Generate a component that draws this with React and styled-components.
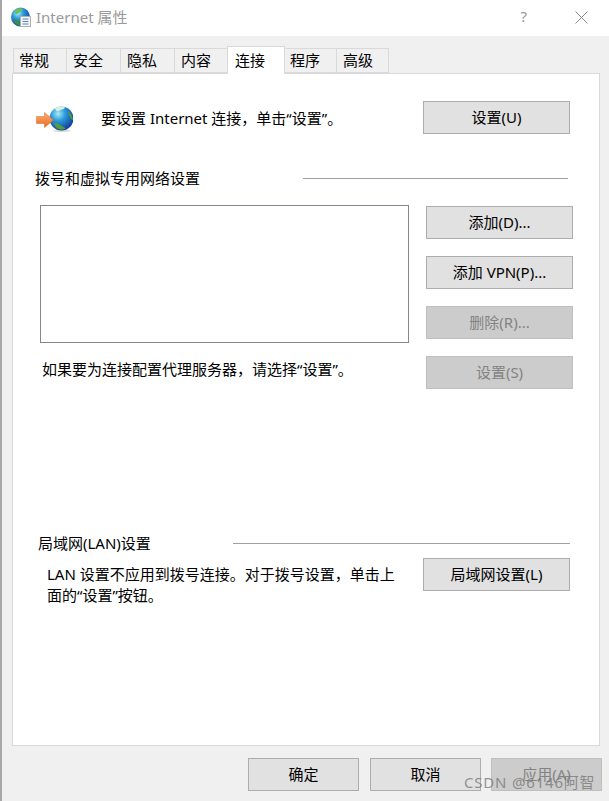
import React from "react";
import styled, { createGlobalStyle } from "styled-components";

const GlobalStyle = createGlobalStyle`
  html, body {
    margin: 0;
    padding: 0;
    background: #f0f0f0;
  }
  * {
    box-sizing: border-box;
  }
`;

const Window = styled.div`
  position: relative;
  width: 609px;
  height: 801px;
  overflow: hidden;
  background: #f0f0f0;
  border-left: 2px solid #a8a8a8;
  font-family: "Noto Sans", "Noto Sans CJK SC", sans-serif;
  font-size: 15px;
  color: #000;
`;

// 1px sliver of the page behind the dialog, left of its border
const BehindEdge = styled.div`
  position: absolute;
  left: -2px;
  top: ${({ $top }) => $top}px;
  width: 1px;
  height: ${({ $h }) => $h}px;
  background: ${({ $color }) => $color};
`;

const TitleBar = styled.div`
  height: 36px;
  background: #fff;
  display: flex;
  align-items: center;
  padding-left: 8px;
`;

const TitleText = styled.span`
  margin-left: 4px;
  padding-bottom: 4px;
  font-size: 15px;
  color: #9a9a9a;
`;

const TitleControls = styled.div`
  margin-left: auto;
  display: flex;
  align-items: center;
  gap: 48px;
  padding: 0 21px 2px 0;
`;

const Help = styled.span`
  padding-bottom: 2px;
  font-size: 15px;
  color: #9a9a9a;
`;

const Body = styled.div`
  padding: 10px 7px 0 10px;
`;

const Tabs = styled.div`
  display: flex;
  align-items: flex-end;
  height: 27px;
  padding-left: 1px;
  position: relative;
  z-index: 1;
`;

const Tab = styled.div`
  width: ${({ $w }) => $w}px;
  height: ${({ $active }) => ($active ? "28px" : "25px")};
  margin-bottom: ${({ $active }) => ($active ? "-1px" : "0")};
  margin-left: ${({ $active }) => ($active ? "-1px" : "0")};
  margin-right: ${({ $active }) => ($active ? "-1px" : "0")};
  display: flex;
  align-items: center;
  padding: 0 0 2px ${({ $first, $active }) => ($first ? 5 : $active ? 7 : 6)}px;
  background: ${({ $active }) => ($active ? "#fff" : "#f0f0f0")};
  border: 1px solid #d9d9d9;
  border-left-width: ${({ $first, $active }) => ($first || $active ? "1px" : "0")};
  border-bottom-width: ${({ $active }) => ($active ? "0" : "1px")};
  position: relative;
  z-index: ${({ $active }) => ($active ? 2 : 0)};
`;

const Panel = styled.div`
  width: 588px;
  height: 673px;
  background: #fff;
  border: 1px solid #d9d9d9;
  padding: 27px 29px 0 22px;
`;

const TopRow = styled.div`
  display: flex;
  align-items: center;
  height: 33px;
`;

const ArrowGlobe = styled.svg`
  width: 38px;
  height: 28px;
  flex: none;
`;

const TopText = styled.span`
  margin-left: 28px;
`;

const PushButton = styled.div`
  width: 147px;
  height: 33px;
  flex: none;
  display: flex;
  align-items: center;
  justify-content: center;
  padding-bottom: 2px;
  background: ${({ $disabled }) => ($disabled ? "#cccccc" : "#e1e1e1")};
  border: 1px solid ${({ $disabled }) => ($disabled ? "#bfbfbf" : "#adadad")};
  color: ${({ $disabled }) => ($disabled ? "#838383" : "#000")};
`;

const TopButton = styled(PushButton)`
  margin-left: auto;
`;

const SectionHead = styled.div`
  display: flex;
  align-items: center;
  height: 22px;
  margin-top: ${({ $top }) => $top}px;
  margin-left: ${({ $left }) => $left || 0}px;
  margin-right: ${({ $right }) => $right || 0}px;
`;

const HeadLabel = styled.span`
  padding-bottom: 2px;
`;

const HeadRule = styled.div`
  height: 1px;
  background: #a0a0a0;
  margin-left: auto;
  width: ${({ $w }) => $w}px;
`;

const DialSection = styled.div`
  display: grid;
  grid-template-columns: 369px 147px;
  column-gap: 17px;
  margin-top: 17px;
  margin-left: 5px;
`;

const ListBox = styled.div`
  height: 138px;
  margin-top: -1px;
  background: #fff;
  border: 1px solid #828790;
`;

const SideButtons = styled.div`
  display: flex;
  flex-direction: column;
  gap: 17px;
`;

const ProxyNote = styled.div`
  margin-top: 15px;
  margin-left: 2px;
  white-space: nowrap;
`;

const LanRow = styled.div`
  display: flex;
  margin-top: 4px;
  margin-left: 12px;
`;

const LanText = styled.div`
  width: 360px;
  line-height: 21px;
  margin-top: 6px;
`;

const Footer = styled.div`
  display: flex;
  justify-content: flex-end;
  gap: 11px;
  margin-top: 12px;
`;

const FootButton = styled(PushButton)`
  width: 111px;

  &:last-child {
    margin-left: -1px;
  }
`;

const Watermark = styled.span`
  position: absolute;
  left: 462px;
  top: 771px;
  font-size: 15px;
  letter-spacing: 0.8px;
  color: rgba(115, 115, 115, 0.75);
  white-space: nowrap;
`;

const TABS = [
  ["常规", 54],
  ["安全", 54],
  ["隐私", 54],
  ["内容", 53],
  ["连接", 58],
  ["程序", 53],
  ["高级", 52],
];

const GlobeDefs = ({ id }) => (
  <defs>
    <radialGradient id={`${id}-sea`} cx="36%" cy="30%" r="75%">
      <stop offset="0" stopColor="#a5ecf7" />
      <stop offset="0.4" stopColor="#2b9ad8" />
      <stop offset="1" stopColor="#10379a" />
    </radialGradient>
    <linearGradient id={`${id}-arrow`} x1="0" y1="0" x2="0" y2="1">
      <stop offset="0" stopColor="#fbb27a" />
      <stop offset="1" stopColor="#e8671f" />
    </linearGradient>
  </defs>
);

const ConnectIcon = () => (
  <ArrowGlobe viewBox="0 0 38 28">
    <GlobeDefs id="big" />
    <ellipse cx="27" cy="26.800" rx="9" ry="1.200" fill="#dcdcdc" />
    <circle cx="26.500" cy="14.500" r="12" fill="url(#big-sea)" />
    <path d="M20 4.500c3-2 7-2.500 9.500-1.500 1 1-1 2.500-3 2.500-2 .5-3 2-4.500 1.500-1-.5-2-1.500-2-2.500z" fill="#d8efe0" />
    <path d="M19 19c3-.5 6 1.500 8 3 1 1 3 1.500 3.500 2.500-2 1.500-6 1.500-8 0-1.500-1-3-3.500-3.500-5.500z" fill="#4f9e3c" />
    <path d="M33 7c2 1.500 4.500 5 5 8.500-1 .5-2.500-.5-3-2.500-.5-1.500-2.300-3.500-2-6z" fill="#4f9e3c" />
    <path d="M1.500 12.500h8V8.500l9 7.500-9 7.500v-4h-8z" fill="url(#big-arrow)" stroke="#d9651f" strokeWidth=".5" />
  </ArrowGlobe>
);

const TitleIcon = () => (
  <svg width="22" height="22" viewBox="0 0 22 22" style={{ flex: "none" }}>
    <GlobeDefs id="small" />
    <circle cx="10.500" cy="10" r="9.500" fill="url(#small-sea)" />
    <path d="M4.500 4c2-2 6-3 8-2 1 1-1 2-2 2.500-2 .5-2 2.500-4 2.500-1 0-2-1-2-3z" fill="#6fbf52" />
    <path d="M3.500 12c2 0 5 2 6 4 .5 1 .5 2 0 3-3-.5-5-3-6-7z" fill="#3f8f35" />
    <rect x="10.500" y="9.500" width="10" height="10" fill="#f3f5f7" stroke="#a9b2ba" />
    <path d="M12.500 12h6M12.500 14.500h6M12.500 17h6" stroke="#5b87b8" strokeWidth="1" />
  </svg>
);

const CloseIcon = () => (
  <svg width="13" height="13" viewBox="0 0 13 13">
    <path d="M.5.500l12 12M12.500.500l-12 12" stroke="#8a8a8a" strokeWidth="1" fill="none" />
  </svg>
);

const App = () => {
  return (
    <Window>
      <GlobalStyle />
      <BehindEdge $top={0} $h={801} $color="#e6e6e6" />
      <BehindEdge $top={28} $h={11} $color="#3a4a78" />
      <BehindEdge $top={60} $h={13} $color="#8a5a30" />
      <TitleBar>
        <TitleIcon />
        <TitleText>Internet 属性</TitleText>
        <TitleControls>
          <Help>?</Help>
          <CloseIcon />
        </TitleControls>
      </TitleBar>
      <Body>
        <Tabs>
          {TABS.map(([label, w], i) => (
            <Tab key={label} $w={w} $first={i === 0} $active={label === "连接"}>
              {label}
            </Tab>
          ))}
        </Tabs>
        <Panel>
          <TopRow>
            <ConnectIcon />
            <TopText>要设置 Internet 连接，单击“设置”。</TopText>
            <TopButton>设置(U)</TopButton>
          </TopRow>
          <SectionHead $top={33} $right={2}>
            <HeadLabel>拨号和虚拟专用网络设置</HeadLabel>
            <HeadRule $w={265} />
          </SectionHead>
          <DialSection>
            <div>
              <ListBox />
              <ProxyNote>如果要为连接配置代理服务器，请选择“设置”。</ProxyNote>
            </div>
            <SideButtons>
              <PushButton>添加(D)...</PushButton>
              <PushButton>添加 VPN(P)...</PushButton>
              <PushButton $disabled>删除(R)...</PushButton>
              <PushButton $disabled>设置(S)</PushButton>
            </SideButtons>
          </DialSection>
          <SectionHead $top={143} $left={3}>
            <HeadLabel>局域网(LAN)设置</HeadLabel>
            <HeadRule $w={337} />
          </SectionHead>
          <LanRow>
            <LanText>
              LAN 设置不应用到拨号连接。对于拨号设置，单击上面的“设置”按钮。
            </LanText>
            <TopButton>局域网设置(L)</TopButton>
          </LanRow>
        </Panel>
        <Footer>
          <FootButton>确定</FootButton>
          <FootButton>取消</FootButton>
          <FootButton $disabled>应用(A)</FootButton>
        </Footer>
      </Body>
      <Watermark>CSDN @6146阿智</Watermark>
    </Window>
  );
};

export default App;
